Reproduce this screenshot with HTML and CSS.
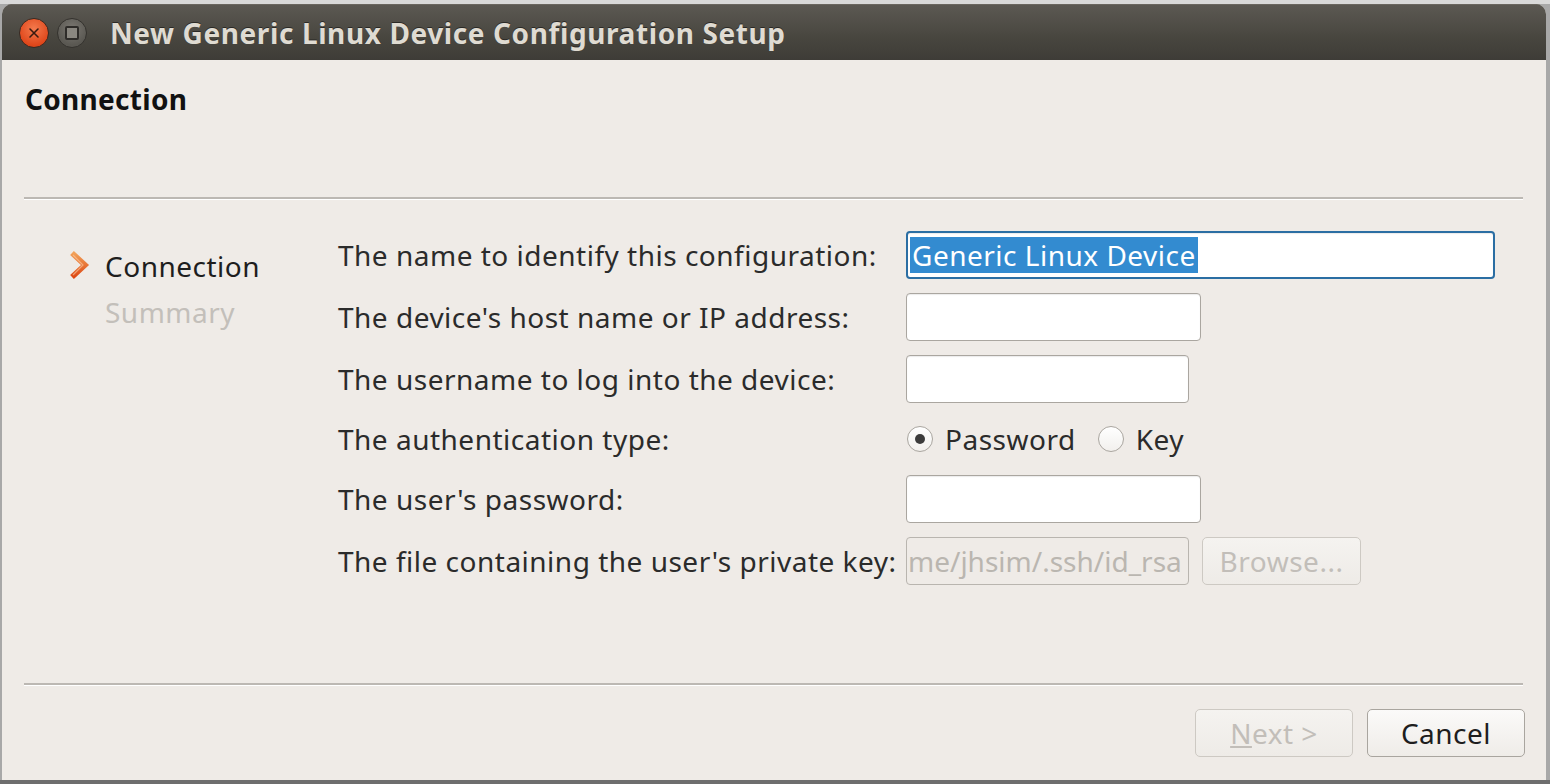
FILE: index.html
```html
<!DOCTYPE html>
<html>
<head>
<meta charset="utf-8">
<link rel="stylesheet" href="styles.css">
</head>
<body>
<div class="window">
  <div class="titlebar">
    <div class="tb-btn close"><svg width="12" height="12" viewBox="0 0 12 12"><path d="M2 2 L10 10 M10 2 L2 10" stroke="#3a1a10" stroke-width="1.6" stroke-linecap="round"/></svg></div>
    <div class="tb-btn mini"><span class="sq"></span></div>
    <div class="title">New Generic Linux Device Configuration Setup</div>
  </div>
  <div class="content">
    <div class="page-title">Connection</div>
    <div class="sep"></div>
    <div class="main">
      <div class="steps">
        <div class="step current">
          <svg class="chev" width="22" height="30" viewBox="0 0 22 30"><defs><linearGradient id="cg" x1="0" y1="0" x2="0" y2="1"><stop offset="0" stop-color="#f2a25a"/><stop offset="1" stop-color="#dd4814"/></linearGradient></defs><path d="M4 3 L17 15 L4 27" fill="none" stroke="url(#cg)" stroke-width="5.5" stroke-linejoin="miter"/><path d="M5 5 L15 15 L5 25" fill="none" stroke="#fbd0a8" stroke-width="1.2" opacity="0.6"/></svg>
          <span>Connection</span>
        </div>
        <div class="step next"><span>Summary</span></div>
      </div>
      <div class="form">
        <div class="label">The name to identify this configuration:</div>
        <div class="field"><div class="input focus w-full"><span class="sel">Generic Linux Device</span></div></div>
        <div class="label">The device's host name or IP address:</div>
        <div class="field"><div class="input w-295"></div></div>
        <div class="label">The username to log into the device:</div>
        <div class="field"><div class="input w-283"></div></div>
        <div class="label">The authentication type:</div>
        <div class="field radios">
          <span class="radio checked"></span><span class="rlabel">Password</span>
          <span class="radio"></span><span class="rlabel">Key</span>
        </div>
        <div class="label">The user's password:</div>
        <div class="field"><div class="input w-295"></div></div>
        <div class="label">The file containing the user's private key:</div>
        <div class="field row">
          <div class="input disabled w-283"><span class="dtext">me/jhsim/.ssh/id_rsa</span></div>
          <div class="btn disabled browse">Browse...</div>
        </div>
      </div>
    </div>
    <div class="sep"></div>
    <div class="buttons">
      <div class="btn disabled"><span class="u">N</span>ext &gt;</div>
      <div class="btn">Cancel</div>
    </div>
  </div>
</div>
</body>
</html>
```

FILE: styles.css
```css
html, body {
  margin: 0;
  padding: 0;
}
body {
  width: 1550px;
  height: 784px;
  background: linear-gradient(#d9d9d9 0, #d9d9d9 4px, #a8a8a8 4px, #a8a8a8 780px, #6e6e6e 780px);
  font-family: "Noto Sans", "DejaVu Sans", sans-serif;
  overflow: hidden;
}
.window {
  margin: 4px 4px 0 2px;
  height: 776px;
  display: flex;
  flex-direction: column;
  background: #efebe7;
  border-radius: 10px 10px 0 0;
  overflow: hidden;
}
.titlebar {
  height: 56px;
  flex: none;
  background: linear-gradient(#5c5953, #48463f 60%, #3e3c37);
  display: flex;
  align-items: center;
  padding-left: 17px;
  box-shadow: inset 0 1px 0 #6a665f;
}
.tb-btn {
  width: 30px;
  height: 30px;
  border-radius: 50%;
  display: flex;
  align-items: center;
  justify-content: center;
  box-sizing: border-box;
  margin-top: 2px;
}
.close {
  background: radial-gradient(circle at 50% 35%, #f47a4d, #e0481c 70%, #c63a12);
  border: 1px solid #3a2a22;
}
.mini {
  margin-left: 8px;
  background: radial-gradient(circle at 50% 35%, #7b7872, #5a5852 70%);
  border: 1px solid #34322e;
}
.sq {
  width: 10px;
  height: 10px;
  border: 2px solid #2e2c29;
  border-radius: 2px;
  background: #8a8780;
}
.title {
  margin-left: 23px;
  color: #dfdbd2;
  font-size: 28px;
  font-weight: bold;
  letter-spacing: 0.6px;
  text-shadow: 0 -1px 0 #2a2926;
  margin-top: 2px;
}
.content {
  flex: 1;
  display: flex;
  flex-direction: column;
  padding: 0 23px 0 22px;
}
.page-title {
  font-size: 28px;
  font-weight: bold;
  letter-spacing: 0.3px;
  color: #111;
  padding: 20px 0 0 1px;
  height: 137px;
  box-sizing: border-box;
}
.sep {
  height: 2px;
  background: #bcb8b3;
  border-bottom: 1px solid #ffffff;
  flex: none;
}
.main {
  display: flex;
  height: 483px;
  padding-top: 31px;
  box-sizing: border-box;
}
.steps {
  width: 314px;
  padding-left: 44px;
  padding-top: 12px;
  box-sizing: border-box;
}
.step {
  display: flex;
  align-items: center;
  font-size: 28px;
  letter-spacing: 0.5px;
  height: 46px;
}
.step span {
  margin-left: 37px;
}
.step.current span {
  margin-left: 15px;
  color: #1e1e1e;
}
.chev {
  margin-top: -2px;
}
.step.next {
  color: #c3bfba;
}
.form {
  display: grid;
  grid-template-columns: 568px 1fr;
  grid-template-rows: 48px 48px 48px 44px 48px 48px;
  row-gap: 14px;
  width: 1180px;
}
.label {
  font-size: 28px;
  letter-spacing: 0.5px;
  color: #2b2b2b;
  display: flex;
  align-items: center;
}
.field {
  display: flex;
  align-items: center;
}
.row {
  gap: 13px;
}
.input {
  height: 48px;
  box-sizing: border-box;
  background: #ffffff;
  border: 1px solid #aaa6a0;
  border-radius: 4px;
  box-shadow: inset 0 1px 1px rgba(0,0,0,0.08);
  display: flex;
  align-items: center;
  overflow: hidden;
  font-size: 28px;
  letter-spacing: 0.5px;
}
.w-full { width: 589px; }
.w-295 { width: 295px; }
.w-283 { width: 283px; }
.input.focus {
  border: 2px solid #2b6ea3;
  padding-left: 2px;
}
.sel {
  background: #338bd0;
  color: #ffffff;
  line-height: 36px;
  padding: 0 2px;
}
.input.disabled {
  background: #efebe7;
  border-color: #b9b5af;
  color: #bab6b0;
  box-shadow: none;
  padding-left: 1px;
  letter-spacing: 0;
}
.dtext {
  white-space: nowrap;
}
.radios {
  font-size: 28px;
  letter-spacing: 0.5px;
  color: #2b2b2b;
}
.radio {
  width: 26px;
  height: 26px;
  box-sizing: border-box;
  border-radius: 50%;
  border: 1px solid #aaa6a0;
  background: linear-gradient(#ffffff, #f2f0ed);
  display: flex;
  align-items: center;
  justify-content: center;
  margin-left: 1px;
}
.radio.checked::after {
  content: "";
  width: 10px;
  height: 10px;
  border-radius: 50%;
  background: #3c3c3c;
}
.rlabel {
  margin-left: 12px;
  margin-right: 21px;
}
.btn {
  width: 158px;
  height: 48px;
  box-sizing: border-box;
  border: 1px solid #a9a59f;
  border-radius: 5px;
  background: linear-gradient(#fbfaf9, #efece8);
  display: flex;
  align-items: center;
  justify-content: center;
  font-size: 28px;
  letter-spacing: 0.5px;
  color: #1e1e1e;
}
.btn.disabled {
  border-color: #cdc9c3;
  color: #c2beb9;
  background: linear-gradient(#f5f3f0, #eeebe7);
}
.browse {
  width: 159px;
}
.u {
  text-decoration: underline;
}
.buttons {
  display: flex;
  justify-content: flex-end;
  gap: 14px;
  padding-top: 23px;
  margin-right: -2px;
}
```
